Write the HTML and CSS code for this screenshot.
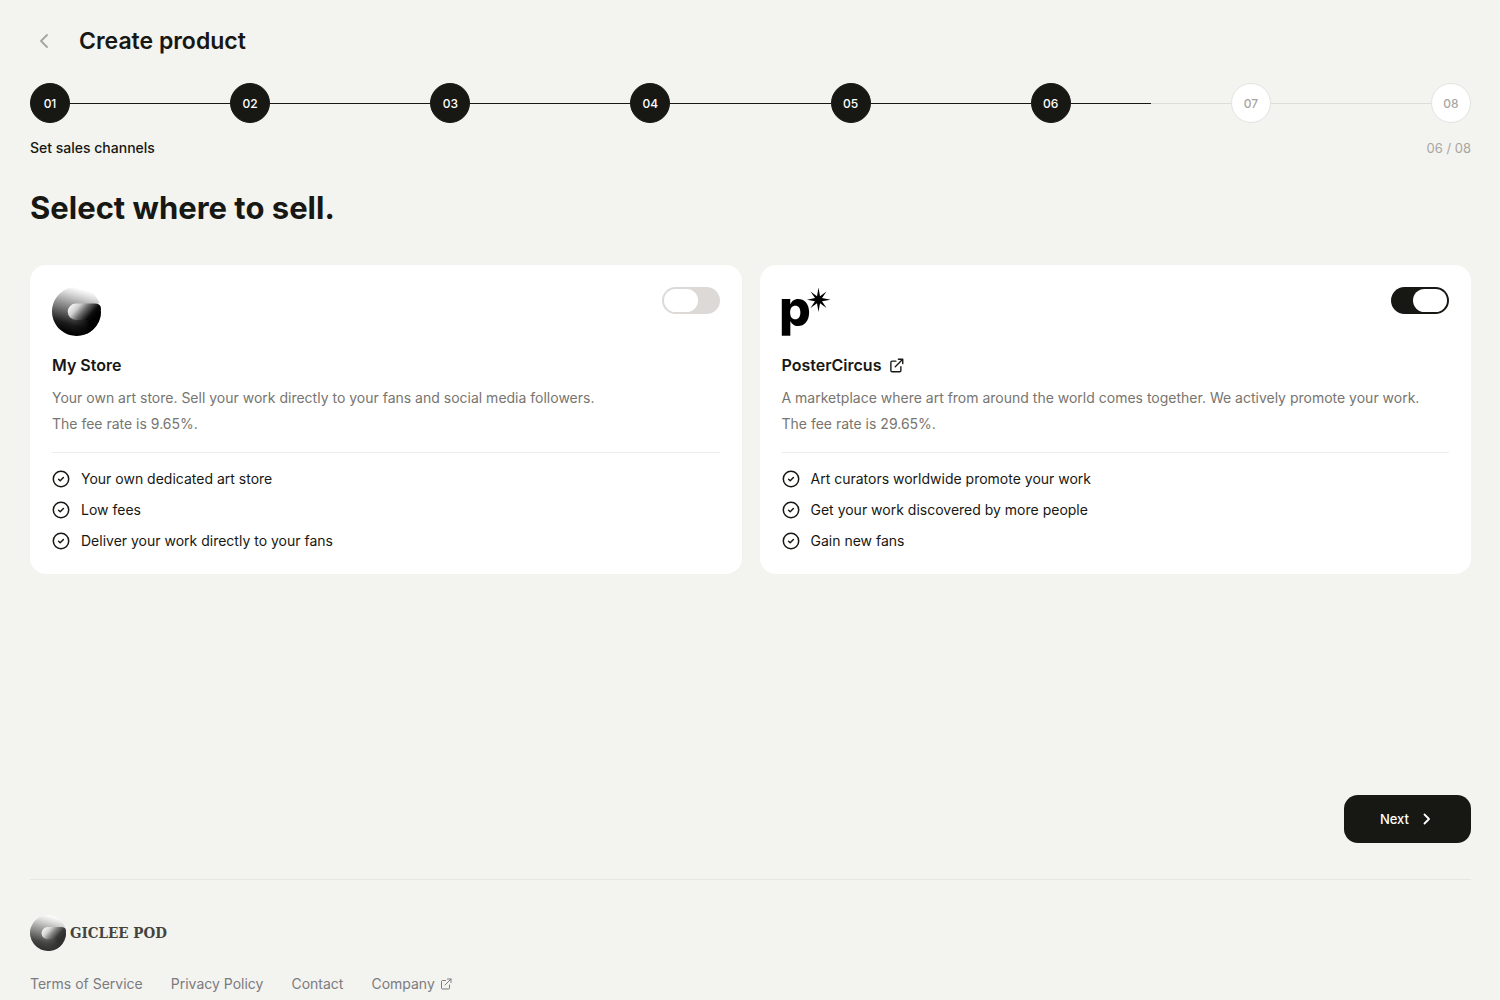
FILE: index.html
```html
<!DOCTYPE html>
<html lang="en">

<head>
    <meta charset="UTF-8">
    <meta name="viewport" content="width=device-width, initial-scale=1.0">
    <title>Create product</title>
    <link rel="stylesheet" href="styles.css">
</head>

<body>

    <!-- shared icons -->
    <svg class="sprite" aria-hidden="true">
        <defs>
            <linearGradient id="ringShade" x1="0.75" y1="0.08" x2="0.5" y2="1">
                <stop offset="0" stop-color="#fff" />
                <stop offset="0.15" stop-color="#dadada" />
                <stop offset="0.35" stop-color="#a0a0a0" />
                <stop offset="0.55" stop-color="#666" />
                <stop offset="0.8" stop-color="#1a1a1a" />
                <stop offset="1" stop-color="#000" />
            </linearGradient>
            <linearGradient id="ringSide" x1="0" y1="0" x2="1" y2="0">
                <stop offset="0" stop-color="#000" stop-opacity="0" />
                <stop offset="0.6" stop-color="#000" />
            </linearGradient>
            <linearGradient id="tongueShade" x1="0" y1="0.3" x2="0.9" y2="0.7">
                <stop offset="0" stop-color="#f6f6f6" />
                <stop offset="0.25" stop-color="#d0d0d0" />
                <stop offset="0.5" stop-color="#6a6a6a" />
                <stop offset="0.8" stop-color="#0c0c0c" />
                <stop offset="1" stop-color="#000" />
            </linearGradient>
        </defs>
        <symbol id="ring" viewBox="0 0 49 49">
            <path d="M43 16.500Q46.500 16.500 47.500 16A24.500 24.500 0 1 0 49 24.500Z" fill="url(#ringShade)" />
            <path d="M22 24.500H49A24.500 24.500 0 0 1 22 48.900Z" fill="url(#ringSide)" />
            <path d="M24 16.500H43Q49 16.500 49 22Q49 28 46.500 33H24A8 8 0 0 1 24 16.500Z" fill="url(#tongueShade)" />
        </symbol>
        <symbol id="check" viewBox="0 0 18 18">
            <circle cx="9" cy="9" r="7.700" />
            <path d="M6.600 9.200 8.200 10.700 11.400 7.500" />
        </symbol>
        <symbol id="external" viewBox="0 0 24 24">
            <path d="M11 5H5A2 2 0 0 0 3 7V20A2 2 0 0 0 5 22H17A2 2 0 0 0 19 20V14" />
            <path d="M15 2H22V9M22 2 10 14" />
        </symbol>
    </svg>

    <div class="page">
        <header class="page-header">
            <button type="button" class="back" aria-label="Back">
                <svg viewBox="0 0 10 14">
                    <path d="M8 1 2 7 8 13" />
                </svg>
            </button>
            <h1>Create product</h1>
        </header>

        <ol class="steps">
            <li class="step done"><span class="dot">01</span></li>
            <li class="step done"><span class="dot">02</span></li>
            <li class="step done"><span class="dot">03</span></li>
            <li class="step done"><span class="dot">04</span></li>
            <li class="step done"><span class="dot">05</span></li>
            <li class="step current" aria-current="step"><span class="dot">06</span></li>
            <li class="step"><span class="dot">07</span></li>
            <li class="step"><span class="dot">08</span></li>
        </ol>
        <div class="step-info">
            <span>Set sales channels</span>
            <span class="count">06 / 08</span>
        </div>

        <main>
            <h2>Select where to sell.</h2>

            <div class="channels">
                <section class="card">
                    <div class="card-top">
                        <svg class="logo">
                            <use href="#ring" />
                        </svg>
                        <input type="checkbox" role="switch" class="switch" id="myStore">
                    </div>
                    <h3><label for="myStore">My Store</label></h3>
                    <p>Your own art store. Sell your work directly to your fans and social media followers.<br>The fee rate is 9.65%.</p>
                    <ul>
                        <li><svg><use href="#check" /></svg>Your own dedicated art store</li>
                        <li><svg><use href="#check" /></svg>Low fees</li>
                        <li><svg><use href="#check" /></svg>Deliver your work directly to your fans</li>
                    </ul>
                </section>

                <section class="card">
                    <div class="card-top">
                        <svg class="logo" viewBox="0 0 49 49">
                            <text class="logo-p" x="-3" y="39">p</text>
                            <path d="M36.500 0.500 38 9.200 44.500 4.500 40 11 48.500 12.700 40 14.300 44.500 21 38 16.300 36.500 25 35 16.300 28.500 21 33 14.300 25 12.700 33 11 28.500 4.500 35 9.200Z" />
                        </svg>
                        <input type="checkbox" role="switch" class="switch" id="posterCircus" checked>
                    </div>
                    <h3>
                        <label for="posterCircus">PosterCircus</label>
                        <a href="#" aria-label="Open PosterCircus"><svg><use href="#external" /></svg></a>
                    </h3>
                    <p>A marketplace where art from around the world comes together. We actively promote your work.<br>The fee rate is 29.65%.</p>
                    <ul>
                        <li><svg><use href="#check" /></svg>Art curators worldwide promote your work</li>
                        <li><svg><use href="#check" /></svg>Get your work discovered by more people</li>
                        <li><svg><use href="#check" /></svg>Gain new fans</li>
                    </ul>
                </section>
            </div>

            <div class="actions">
                <button type="button" class="next">
                    Next
                    <svg viewBox="0 0 8 12">
                        <path d="M1.500 1.500 6 6 1.500 10.500" />
                    </svg>
                </button>
            </div>
        </main>

        <footer>
            <div class="brand">
                <svg>
                    <use href="#ring" />
                </svg>
                <span>GICLEE POD</span>
            </div>
            <nav>
                <a href="#">Terms of Service</a>
                <a href="#">Privacy Policy</a>
                <a href="#">Contact</a>
                <a href="#">Company <svg><use href="#external" /></svg></a>
            </nav>
        </footer>
    </div>

</body>

</html>
```
FILE: styles.css
```css
* {
    box-sizing: border-box;
}

body {
    margin: 0;
    background-color: #f3f3ef;
    color: #171713;
    font-family: Inter, sans-serif;
    font-size: 14px;
}

h1, h2, h3, p, ol, ul {
    margin: 0;
    padding: 0;
}

ol, ul {
    list-style: none;
}

a {
    color: inherit;
    text-decoration: none;
}

svg {
    flex: none;
    stroke-linecap: round;
    stroke-linejoin: round;
}

.sprite {
    position: absolute;
    width: 0;
    height: 0;
}

.page {
    padding: 23px 29px 0 30px;
}

.page-header {
    display: flex;
    align-items: center;
    gap: 21px;
    height: 36px;
}

.page-header h1 {
    font-size: 23px;
    font-weight: 600;
}

.back {
    display: flex;
    align-items: center;
    justify-content: center;
    width: 28px;
    height: 28px;
    padding: 0;
    border: none;
    background: none;
    cursor: pointer;
}

.back svg {
    width: 10px;
    height: 14px;
    fill: none;
    stroke: #a5a5a0;
    stroke-width: 1.8;
}

.steps {
    display: flex;
    margin-top: 24px;
}

.step {
    display: flex;
    flex: 1;
    align-items: center;
}

.step:last-child {
    flex: none;
}

.step:not(:last-child)::after {
    content: "";
    flex: 1;
    height: 1px;
    background: #dcdcd9;
}

.step.done:not(:last-child)::after {
    background: #171713;
}

.step.current:not(:last-child)::after {
    background: linear-gradient(to right, #171713 50%, #dcdcd9 50%);
}

.dot {
    display: flex;
    align-items: center;
    justify-content: center;
    width: 40px;
    height: 40px;
    border: 1px solid #e4e4e2;
    border-radius: 50%;
    background: #fff;
    color: #a8a6a2;
    font-size: 12px;
    font-weight: 500;
}

.done .dot,
.current .dot {
    border-color: #171713;
    background: #171713;
    color: #fff;
}

.step-info {
    display: flex;
    justify-content: space-between;
    margin-top: 15px;
    line-height: 20px;
    font-weight: 500;
}

.count {
    color: #a8a6a2;
    font-size: 13px;
    font-weight: 400;
}

h2 {
    margin-top: 30px;
    font-size: 31px;
    font-weight: 700;
    line-height: 40px;
}

.channels {
    display: grid;
    grid-template-columns: 1fr 1fr;
    gap: 18px;
    margin-top: 37px;
}

.card {
    padding: 22px 22px 21px;
    border-radius: 16px;
    background: #fff;
}

.card-top {
    display: flex;
    justify-content: space-between;
    align-items: flex-start;
}

.logo {
    width: 49px;
    height: 49px;
    overflow: visible;
}

.logo-p {
    font-size: 50px;
    font-weight: 800;
}

.switch {
    appearance: none;
    display: flex;
    width: 58px;
    height: 27px;
    margin: 0;
    padding: 2px;
    border-radius: 14px;
    background: #dcd9d6;
    cursor: pointer;
}

.switch::before {
    content: "";
    width: 34px;
    border-radius: 12px;
    background: #fff;
}

.switch:checked {
    justify-content: flex-end;
    background: #171713;
}

.card h3 {
    display: flex;
    align-items: center;
    gap: 8px;
    margin-top: 15px;
    font-size: 16px;
    font-weight: 600;
    line-height: 28px;
}

.card h3 a {
    display: flex;
}

.card h3 svg {
    width: 15px;
    height: 15px;
    fill: none;
    stroke: #171713;
    stroke-width: 2.2;
    overflow: visible;
}

.card p {
    margin-top: 6px;
    color: #77756f;
    line-height: 26px;
}

.card ul {
    display: flex;
    flex-direction: column;
    gap: 7px;
    margin-top: 15px;
    padding-top: 14px;
    border-top: 1px solid #ececea;
}

.card li {
    display: flex;
    align-items: center;
    gap: 11px;
    line-height: 24px;
}

.card li svg {
    width: 18px;
    height: 18px;
    fill: none;
    stroke: #171713;
    stroke-width: 1.5;
}

.actions {
    display: flex;
    justify-content: flex-end;
    margin-top: 221px;
}

.next {
    display: flex;
    align-items: center;
    justify-content: center;
    gap: 14px;
    height: 48px;
    padding: 0 40px 0 36px;
    border: none;
    border-radius: 14px;
    background: #171713;
    color: #fff;
    font-family: inherit;
    font-size: 13px;
    font-weight: 500;
    cursor: pointer;
}

.next svg {
    width: 8px;
    height: 12px;
    fill: none;
    stroke: #fff;
    stroke-width: 1.8;
}

footer {
    margin-top: 36px;
    padding: 35px 0 24px;
    border-top: 1px solid #e6e6e2;
}

.brand {
    display: flex;
    align-items: center;
    gap: 4px;
    font-family: "DejaVu Serif Condensed", "DejaVu Serif", serif;
    font-size: 15px;
    font-weight: 700;
    opacity: 0.8;
}

.brand svg {
    width: 36px;
    height: 36px;
}

footer nav {
    display: flex;
    gap: 28px;
    margin-top: 21px;
    color: #7c7b80;
    line-height: 24px;
}

footer nav a {
    display: flex;
    align-items: center;
    gap: 5px;
}

footer nav svg {
    width: 12px;
    height: 12px;
    fill: none;
    stroke: #7c7b80;
    stroke-width: 2;
    overflow: visible;
}
```
